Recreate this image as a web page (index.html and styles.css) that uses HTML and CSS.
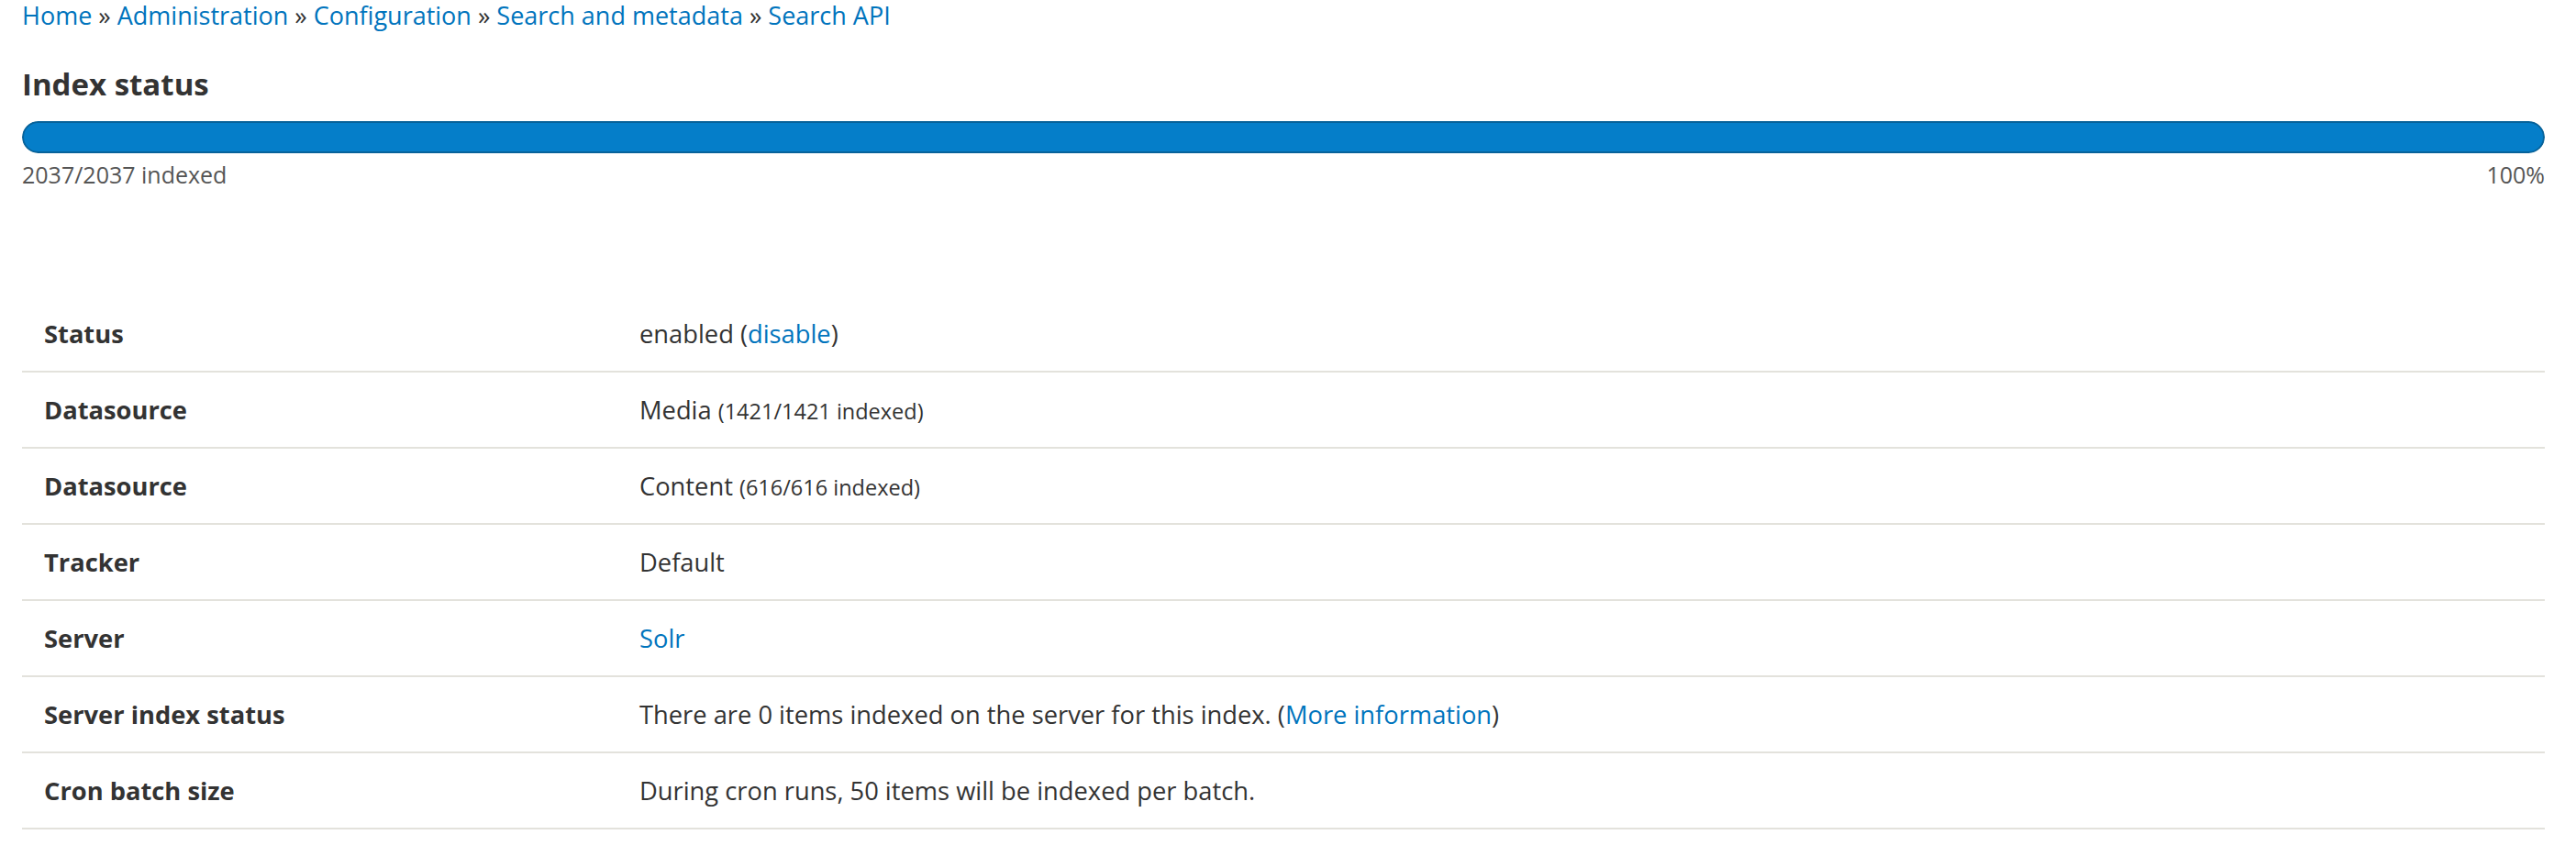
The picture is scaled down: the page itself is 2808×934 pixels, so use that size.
FILE: index.html
```html
<!DOCTYPE html>
<html lang="en">
<head>
    <meta charset="UTF-8">
    <title>Search API index</title>
    <link rel="stylesheet" href="styles.css">
</head>
<body>
    <div class="page">
        <!-- Breadcrumb trail -->
        <nav class="breadcrumb">
            <a href="#">Home</a> » <a href="#">Administration</a> » <a href="#">Configuration</a> » <a href="#">Search and metadata</a> » <a href="#">Search API</a>
        </nav>

        <h3 class="section-title">Index status</h3>

        <!-- Progress bar -->
        <div class="progress">
            <div class="progress-track">
                <div class="progress-bar" style="width: 100%"></div>
            </div>
            <div class="progress-labels">
                <span>2037/2037 indexed</span>
                <span>100%</span>
            </div>
        </div>

        <!-- Index summary -->
        <table class="summary">
            <tbody>
                <tr>
                    <th>Status</th>
                    <td>enabled (<a href="#">disable</a>)</td>
                </tr>
                <tr>
                    <th>Datasource</th>
                    <td>Media <small>(1421/1421 indexed)</small></td>
                </tr>
                <tr>
                    <th>Datasource</th>
                    <td>Content <small>(616/616 indexed)</small></td>
                </tr>
                <tr>
                    <th>Tracker</th>
                    <td>Default</td>
                </tr>
                <tr>
                    <th>Server</th>
                    <td><a href="#">Solr</a></td>
                </tr>
                <tr>
                    <th>Server index status</th>
                    <td>There are 0 items indexed on the server for this index. (<a href="#">More information</a>)</td>
                </tr>
                <tr>
                    <th>Cron batch size</th>
                    <td>During cron runs, 50 items will be indexed per batch.</td>
                </tr>
            </tbody>
        </table>
    </div>
</body>
</html>
```

FILE: styles.css
```css
body {
    margin: 0;
    background: #fff;
    color: #333;
    font-family: "Open Sans", Arial, sans-serif;
    font-size: 27.3px;
}
a {
    color: #0074bd;
    text-decoration: none;
}
.page {
    width: 2750px;
    margin-left: 24px;
}
.breadcrumb {
    height: 33px;
    font-size: 27px;
    line-height: 33px;
    color: #333;
}
.section-title {
    margin: 37px 0 0;
    font-size: 33px;
    line-height: 44px;
    font-weight: bold;
    color: #333;
}
.progress {
    margin-top: 18px;
}
.progress-track {
    height: 35px;
    background: #f3f4ee;
    border-radius: 20px;
    overflow: hidden;
}
.progress-bar {
    box-sizing: border-box;
    height: 100%;
    background: #057ec9;
    border: 2px solid #07629a;
    border-radius: 20px;
}
.progress-labels {
    display: flex;
    justify-content: space-between;
    margin-top: 6px;
    font-size: 25px;
    line-height: 34px;
    color: #555;
}
.summary {
    width: 100%;
    margin-top: 115px;
    border-collapse: collapse;
    table-layout: fixed;
}
.summary tr {
    height: 83px;
    border-bottom: 2px solid #e3e2dc;
}
.summary th,
.summary td {
    padding: 0 24px;
    vertical-align: middle;
    text-align: left;
}
.summary th {
    width: 601px;
    font-weight: bold;
}
.summary small {
    font-size: 23.5px;
}
```
